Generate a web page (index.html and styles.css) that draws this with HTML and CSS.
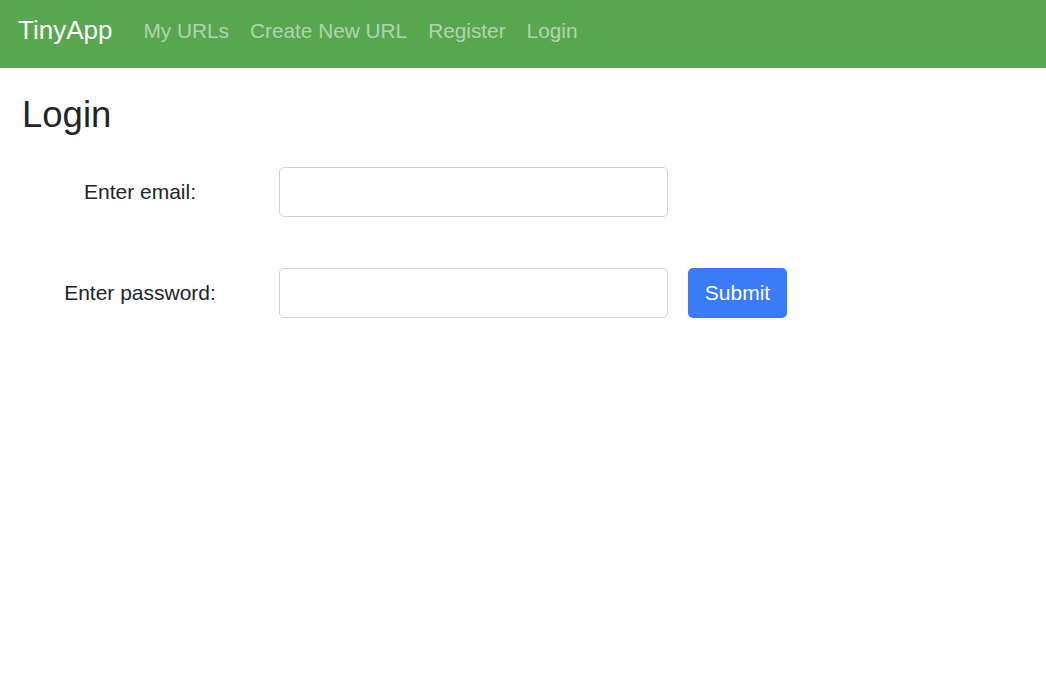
FILE: index.html
```html
<!DOCTYPE html>
<html>
<head>
<meta charset="utf-8">
<link rel="stylesheet" href="styles.css">
</head>
<body>
<nav class="navbar">
  <a class="brand" href="#">TinyApp</a>
  <ul class="nav">
    <li><a href="#">My URLs</a></li>
    <li><a href="#">Create New URL</a></li>
    <li><a href="#">Register</a></li>
    <li><a href="#">Login</a></li>
  </ul>
</nav>
<main class="content">
  <h1 class="title">Login</h1>
  <form class="form">
    <div class="row">
      <label class="label">Enter email:</label>
      <input class="input" type="email">
    </div>
    <div class="row">
      <label class="label">Enter password:</label>
      <input class="input" type="password">
      <button class="btn" type="button">Submit</button>
    </div>
  </form>
</main>
</body>
</html>
```
FILE: styles.css
```css
* { box-sizing: border-box; }
body {
  margin: 0;
  font-family: "Liberation Sans", Arial, sans-serif;
  color: #212529;
  background: #fff;
}
.navbar {
  height: 68px;
  background: #58a64f;
  display: flex;
  align-items: center;
  padding: 0 18px 7px;
}
.brand {
  color: #fff;
  text-decoration: none;
  font-size: 26px;
  margin-right: 31px;
}
.nav {
  list-style: none;
  margin: 0;
  padding: 0;
  display: flex;
  gap: 21px;
}
.nav a {
  color: rgba(255,255,255,0.55);
  text-decoration: none;
  font-size: 20.8px;
  display: block;
}
.content {
  padding: 0 22px;
}
.title {
  font-weight: 400;
  font-size: 36.5px;
  margin: 25px 0 30px;
  line-height: 1.2;
}
.form {
  display: flex;
  flex-direction: column;
  gap: 51px;
}
.row {
  display: flex;
  align-items: center;
}
.label {
  width: 236px;
  text-align: center;
  font-size: 21px;
  margin-right: 21px;
}
.input {
  width: 389px;
  height: 50px;
  border: 1px solid #ced4da;
  border-radius: 5px;
  font-size: 20px;
  padding: 6px 12px;
}
.btn {
  margin-left: 20px;
  width: 99px;
  height: 50px;
  background: #3a7bf7;
  color: #fff;
  border: none;
  border-radius: 5px;
  font-family: inherit;
  font-size: 21px;
}
```
